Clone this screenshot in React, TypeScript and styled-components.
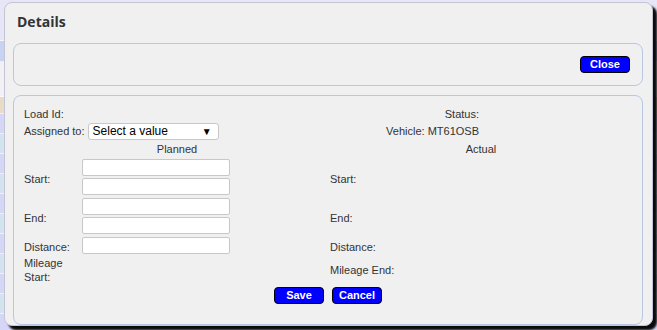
import styled, { createGlobalStyle } from "styled-components";

const GlobalStyle = createGlobalStyle`
  html, body {
    margin: 0;
    padding: 0;
    background: #e6e6f6;
  }
  body {
    font-family: "Liberation Sans", Arial, sans-serif;
    font-size: 11px;
    color: #333;
  }
`;

const stripes = [
  { h: 40, c: "#e6e6f6" },
  { h: 20, c: "#c6d4f2" },
  { h: 34, c: "#f2f2f6" },
  { h: 16, c: "#e8dcc6" },
  { h: 19, c: "#d6d6f6" },
  { h: 19, c: "#d4e4ee" },
  { h: 19, c: "#d6d6f6" },
  { h: 19, c: "#d4e4ee" },
  { h: 19, c: "#d6d6f6" },
  { h: 19, c: "#d4e4ee" },
  { h: 19, c: "#d6d6f6" },
  { h: 19, c: "#d4e4ee" },
  { h: 19, c: "#d6d6f6" },
  { h: 19, c: "#d4e4ee" },
  { h: 19, c: "#d6d6f6" },
];

const App = () => {
  return (
    <Page>
      <GlobalStyle />
      <Backdrop>
        {stripes.map((s, i) => (
          <Stripe key={i} style={{ height: s.h, background: s.c }} />
        ))}
      </Backdrop>

      <Dialog>
        <Title>Details</Title>

        <Panel>
          <Toolbar>
            <BlueButton>Close</BlueButton>
          </Toolbar>
        </Panel>

        <FormPanel>
          <Form>
            <Cell>Load Id:</Cell>
            <Cell>
              <InfoText>Status:</InfoText>
            </Cell>

            <Cell>
              Assigned to:
              <SelectBox>
                <span>Select a value</span>
                <Arrow>▼</Arrow>
              </SelectBox>
            </Cell>
            <Cell>
              <InfoText>Vehicle: MT61OSB</InfoText>
            </Cell>

            <Heading>Planned</Heading>
            <Heading>Actual</Heading>

            <Cell>
              <FieldLabel>Start:</FieldLabel>
              <InputStack>
                <TextInput />
                <TextInput />
              </InputStack>
            </Cell>
            <Cell>Start:</Cell>

            <Cell>
              <FieldLabel>End:</FieldLabel>
              <InputStack>
                <TextInput />
                <TextInput />
              </InputStack>
            </Cell>
            <Cell>End:</Cell>

            <Cell>
              <FieldLabel>Distance:</FieldLabel>
              <InputStack>
                <TextInput />
              </InputStack>
            </Cell>
            <Cell>Distance:</Cell>

            <Cell>
              <TwoLine>
                Mileage
                <br />
                Start:
              </TwoLine>
            </Cell>
            <Cell>Mileage End:</Cell>
          </Form>

          <Actions>
            <BlueButton>Save</BlueButton>
            <BlueButton>Cancel</BlueButton>
          </Actions>
        </FormPanel>
      </Dialog>
    </Page>
  );
};

const Page = styled.div`
  position: relative;
  width: 657px;
  height: 330px;
  overflow: hidden;
`;

const Backdrop = styled.div`
  display: flex;
  flex-direction: column;
  width: 657px;
`;

const Stripe = styled.div`
  width: 100%;
  border-bottom: 1px solid rgba(255, 255, 255, 0.6);
`;

const Dialog = styled.div`
  position: absolute;
  left: 4px;
  top: 2px;
  box-sizing: border-box;
  width: 649px;
  height: 324px;
  background: #f0f0f0;
  border: 1px solid #c4c4d4;
  border-radius: 8px;
  box-shadow: 4px 4px 2px rgba(0, 0, 0, 0.95);
  padding: 0 9px 0 8px;
  display: flex;
  flex-direction: column;
`;

const Title = styled.div`
  font-family: "Open Sans", "DejaVu Sans", sans-serif;
  font-weight: 700;
  font-size: 14px;
  line-height: 20px;
  color: #333;
  padding: 9px 0 0 4px;
  margin-bottom: 11px;
`;

const Panel = styled.div`
  border: 1px solid #b8c8e2;
  border-radius: 8px;
  height: 41px;
`;

const Toolbar = styled.div`
  display: flex;
  justify-content: flex-end;
  align-items: center;
  height: 100%;
  padding: 0 12px;
`;

const FormPanel = styled.div`
  margin-top: 9px;
  border: 1px solid #b8c8e2;
  border-radius: 8px;
  height: 219px;
  padding: 9px 10px 0 10px;
  display: flex;
  flex-direction: column;
`;

const Form = styled.div`
  display: grid;
  grid-template-columns: 306px 1fr;
  grid-template-rows: 17px 18px 19px 39px 39px 19px 28px;
`;

const Cell = styled.div`
  display: flex;
  align-items: center;
  white-space: nowrap;
`;

const InfoText = styled.div`
  width: 149px;
  text-align: right;
`;

const Heading = styled.div`
  display: flex;
  align-items: center;
  justify-content: center;
  padding-bottom: 1px;
`;

const FieldLabel = styled.div`
  width: 58px;
  flex-shrink: 0;
`;

const InputStack = styled.div`
  display: flex;
  flex-direction: column;
  gap: 2px;
  align-self: flex-start;
`;

const TextInput = styled.div`
  box-sizing: border-box;
  width: 148px;
  height: 17px;
  background: #fff;
  border: 1px solid #c8c8c8;
  border-radius: 2px;
`;

const SelectBox = styled.div`
  box-sizing: border-box;
  margin-left: 3px;
  width: 131px;
  height: 17px;
  background: #fff;
  border: 1px solid #c8c8c8;
  border-radius: 3px;
  display: flex;
  align-items: center;
  justify-content: space-between;
  padding: 0 6px 0 4px;
  font-size: 12px;
  color: #000;
`;

const Arrow = styled.span`
  font-size: 10px;
  color: #000;
`;

const TwoLine = styled.div`
  line-height: 14px;
`;

const Actions = styled.div`
  display: flex;
  justify-content: center;
  gap: 8px;
  margin-top: 3px;
`;

const BlueButton = styled.button`
  box-sizing: border-box;
  width: 50px;
  height: 17px;
  padding: 0;
  background: #0000ff;
  border: 1px solid #000;
  border-radius: 4px;
  color: #fff;
  font-family: "Liberation Sans", Arial, sans-serif;
  font-weight: 700;
  font-size: 11px;
  line-height: 15px;
  cursor: pointer;
`;

export default App;
